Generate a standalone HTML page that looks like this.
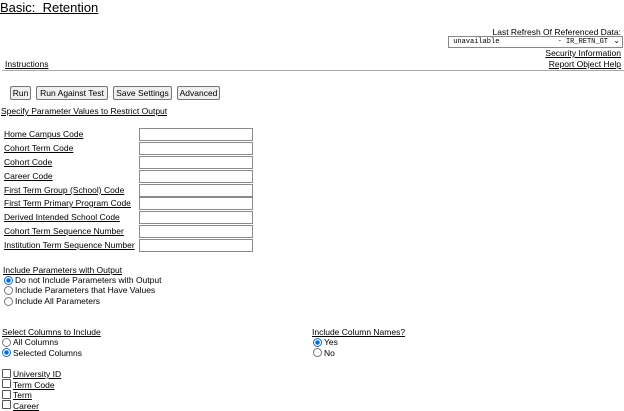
<!DOCTYPE html>
<html><head><style>
body{margin:0;width:624px;height:410px;background:#fff;font-family:"Liberation Sans",sans-serif;font-size:8.5px;color:#000;position:relative;overflow:hidden}
.a{position:absolute;white-space:nowrap}
u{text-decoration:underline}
.in{position:absolute;left:139px;width:112px;height:11px;border:1px solid #8a8a8a;background:#fff}
.btn{position:absolute;top:86px;height:12px;border:1px solid #767676;background:#efefef;font-size:8.5px;line-height:12px;padding:0 1px;border-radius:2px;text-align:center}
.r{position:absolute;width:7px;height:7px;border:1px solid #777;border-radius:50%;background:#fff}
.r.on{border-color:#0a6ed1;background:radial-gradient(circle,#0a6ed1 0 2px,#fff 2.5px)}
.c{position:absolute;left:2px;width:7px;height:7px;border:1px solid #555;border-radius:1px;background:#fff}
</style></head><body>
<div class="a" style="left:0;top:0;font-size:13px;"><u>Basic:&nbsp; Retention</u></div>
<div class="a" style="right:3px;top:27px;">Last Refresh Of Referenced Data:</div>
<div class="a" style="left:448px;top:36px;width:173px;height:10px;border:1px solid #888;font-family:'Liberation Mono',monospace;font-size:7px;line-height:10px;">&nbsp;unavailable<span style="position:absolute;right:14px">- IR_RETN_GT</span><span style="position:absolute;right:2px;font-size:8px">&#8964;</span></div>
<div class="a" style="right:3px;top:48px;"><u>Security Information</u></div>
<div class="a" style="left:5px;top:59px;"><u>Instructions</u></div>
<div class="a" style="right:3px;top:59px;"><u>Report Object Help</u></div>
<div class="a" style="left:2px;top:70px;width:622px;height:1px;background:#aaa"></div>
<div class="btn" style="left:10px;width:17px">Run</div>
<div class="btn" style="left:36px;width:68px">Run Against Test</div>
<div class="btn" style="left:113px;width:55px">Save Settings</div>
<div class="btn" style="left:177px;width:39px">Advanced</div>
<div class="a" style="left:1px;top:106px;"><u>Specify Parameter Values to Restrict Output</u></div>
<div class="a" style="left:4px;top:129px"><u>Home Campus Code</u></div><div class="in" style="top:128px"></div>
<div class="a" style="left:4px;top:143px"><u>Cohort Term Code</u></div><div class="in" style="top:142px"></div>
<div class="a" style="left:4px;top:157px"><u>Cohort Code</u></div><div class="in" style="top:156px"></div>
<div class="a" style="left:4px;top:171px"><u>Career Code</u></div><div class="in" style="top:170px"></div>
<div class="a" style="left:4px;top:185px"><u>First Term Group (School) Code</u></div><div class="in" style="top:184px"></div>
<div class="a" style="left:4px;top:198px"><u>First Term Primary Program Code</u></div><div class="in" style="top:197px"></div>
<div class="a" style="left:4px;top:212px"><u>Derived Intended School Code</u></div><div class="in" style="top:211px"></div>
<div class="a" style="left:4px;top:226px"><u>Cohort Term Sequence Number</u></div><div class="in" style="top:225px"></div>
<div class="a" style="left:4px;top:240px"><u>Institution Term Sequence Number</u></div><div class="in" style="top:239px"></div>
<div class="a" style="left:3px;top:265px"><u>Include Parameters with Output</u></div>
<div class="r on" style="left:4px;top:276px"></div><div class="a" style="left:15px;top:275px">Do not Include Parameters with Output</div>
<div class="r" style="left:4px;top:286px"></div><div class="a" style="left:15px;top:285px">Include Parameters that Have Values</div>
<div class="r" style="left:4px;top:297px"></div><div class="a" style="left:15px;top:296px">Include All Parameters</div>
<div class="a" style="left:2px;top:327px"><u>Select Columns to Include</u></div>
<div class="r" style="left:2px;top:338px"></div><div class="a" style="left:13px;top:337px">All Columns</div>
<div class="r on" style="left:2px;top:348px"></div><div class="a" style="left:13px;top:348px">Selected Columns</div>
<div class="a" style="left:312px;top:327px"><u>Include Column Names?</u></div>
<div class="r on" style="left:313px;top:338px"></div><div class="a" style="left:324px;top:337px">Yes</div>
<div class="r" style="left:313px;top:348px"></div><div class="a" style="left:324px;top:348px">No</div>
<div class="c" style="top:369px"></div><div class="a" style="left:13px;top:369px"><u>University ID</u></div>
<div class="c" style="top:379px"></div><div class="a" style="left:13px;top:380px"><u>Term Code</u></div>
<div class="c" style="top:390px"></div><div class="a" style="left:13px;top:390px"><u>Term</u></div>
<div class="c" style="top:400px"></div><div class="a" style="left:13px;top:401px"><u>Career</u></div>
</body></html>
